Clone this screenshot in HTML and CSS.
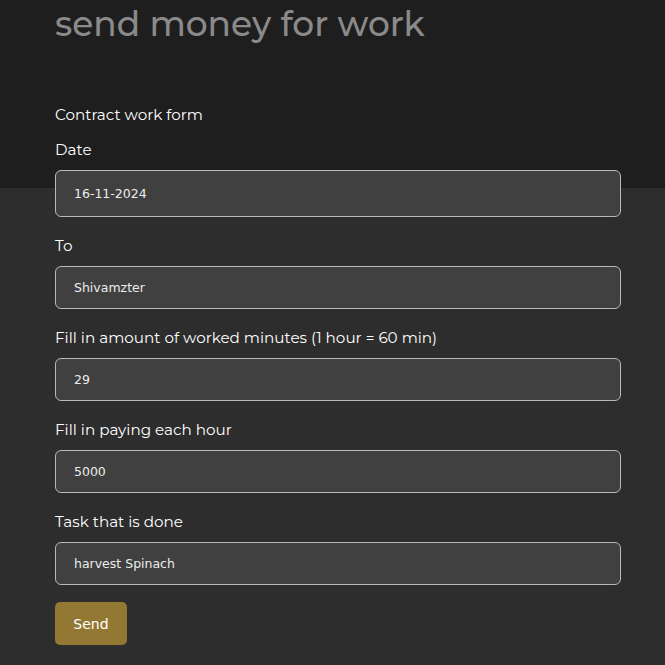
FILE: index.html
```html
<!DOCTYPE html>
<html>
<head>
<meta charset="utf-8">
<link rel="stylesheet" href="styles.css">
</head>
<body>
<main class="page">
  <h1 class="title">send money for work</h1>
  <form class="form">
    <p class="form-title">Contract work form</p>
    <label class="label">Date</label>
    <div class="input input-date">16-11-2024</div>
    <label class="label">To</label>
    <div class="input">Shivamzter</div>
    <label class="label">Fill in amount of worked minutes (1 hour = 60 min)</label>
    <div class="input">29</div>
    <label class="label">Fill in paying each hour</label>
    <div class="input">5000</div>
    <label class="label">Task that is done</label>
    <div class="input">harvest Spinach</div>
    <button type="button" class="btn">Send</button>
  </form>
</main>
</body>
</html>
```
FILE: styles.css
```css
html, body {
  margin: 0;
  padding: 0;
}
body {
  background: linear-gradient(#1e1e1e 0, #1e1e1e 188px, #2d2d2d 188px, #2d2d2d 100%);
  min-height: 665px;
  color: #fff;
  font-family: "Montserrat", "Lato", "DejaVu Sans", sans-serif;
}
.page {
  padding: 4px 44px 0 55px;
}
.title {
  margin: 0;
  font-family: "Montserrat", "Lato", sans-serif;
  font-weight: 500;
  font-size: 34.4px;
  line-height: 40px;
  color: #8a8a8a;
}
.form {
  display: flex;
  flex-direction: column;
  align-items: stretch;
  margin-top: 61px;
}
.form-title {
  margin: 0 0 15px;
  font-size: 15.2px;
  line-height: 20px;
}
.label {
  display: block;
  font-size: 15.2px;
  line-height: 20px;
  margin-bottom: 10px;
}
.input {
  box-sizing: border-box;
  height: 43px;
  margin-bottom: 19px;
  padding: 0 18px;
  display: flex;
  align-items: center;
  background: #404040;
  border: 1px solid #b8b8b8;
  border-radius: 6px;
  font-family: "DejaVu Sans", Verdana, sans-serif;
  font-size: 12.5px;
  color: #ececec;
}
.input-date {
  height: 47px;
}
.btn {
  align-self: flex-start;
  margin-top: -2px;
  width: 72px;
  height: 43px;
  border: none;
  border-radius: 5px;
  background: #937834;
  color: #fff;
  font-family: "DejaVu Sans", Verdana, sans-serif;
  font-size: 14px;
}
```
